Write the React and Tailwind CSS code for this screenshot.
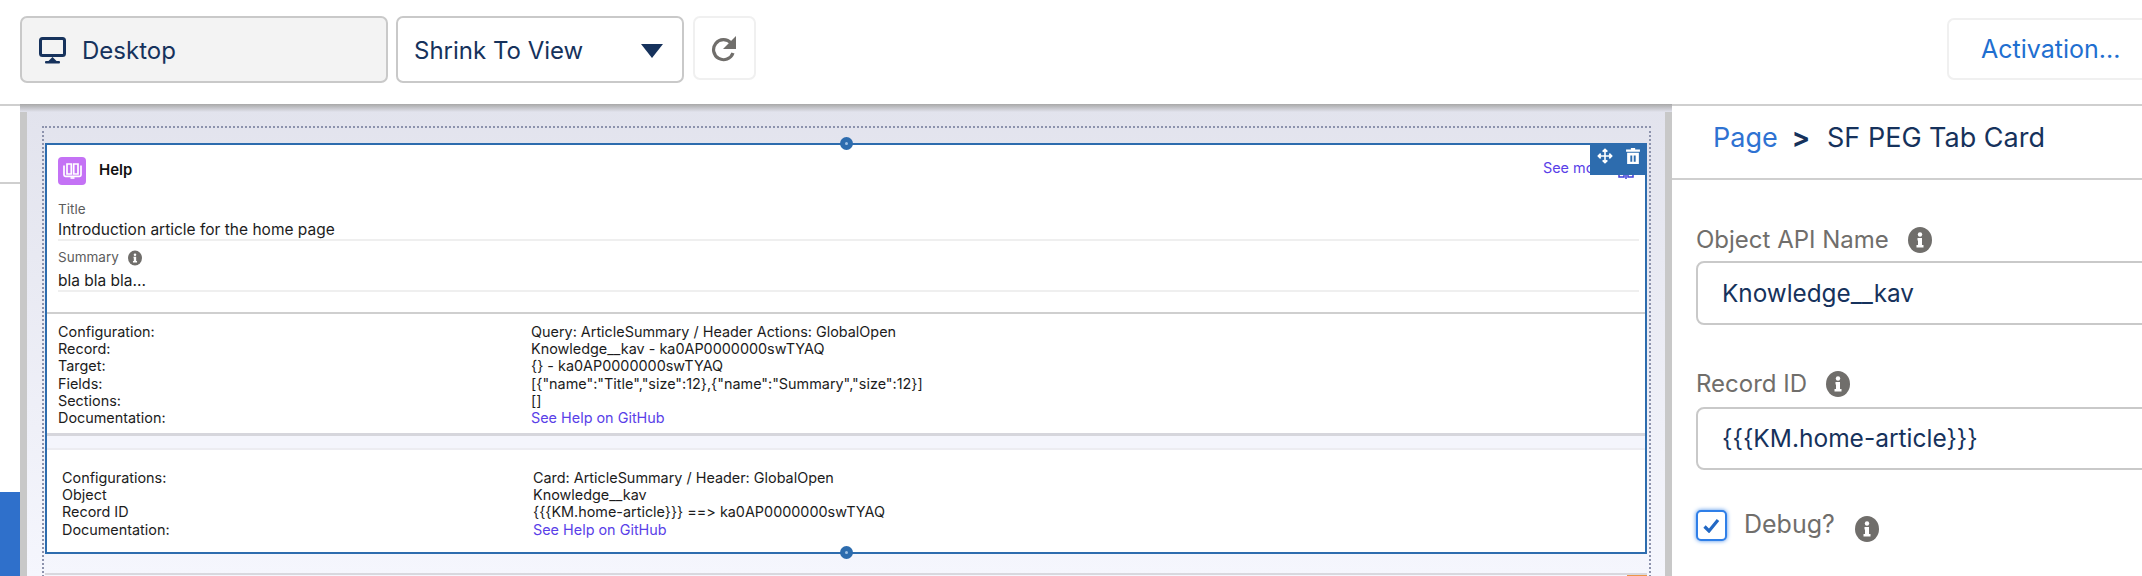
import React from "react";

function Info({ size = 24, className = "" }) {
  return (
    <svg width={size} height={size + 2} viewBox="0 0 24 26" className={className}>
      <ellipse cx="12" cy="13" rx="12" ry="13" fill="#706e6b" />
      <circle cx="12" cy="7.500" r="2.200" fill="#fff" />
      <path d="M9.500 11h4.500v7h1.500v2.500H8.500V18h1.500v-4.500H9.500z" fill="#fff" />
    </svg>
  );
}

function Dot({ className }) {
  return (
    <span className={"absolute left-[793px] w-[13px] h-[13px] rounded-full bg-[#2d6cae] flex items-center justify-center " + className}>
      <span className="w-[3px] h-[3px] rounded-full bg-[#9dc0e4]" />
    </span>
  );
}

function Rows({ rows, labelW, link }) {
  return (
    <div className="flex flex-col text-[14.4px] leading-[17.2px] text-[#1c1c1c]">
      {rows.map(([a, b], i) => (
        <div key={i} className="flex">
          <div className={labelW}>{a}</div>
          <div className={b === link ? "text-[#5a3fe8]" : ""}>{b}</div>
        </div>
      ))}
    </div>
  );
}

export default function App() {
  return (
    <div className="w-[2142px] h-[576px] overflow-hidden bg-white flex flex-col font-['Inter',sans-serif] [font-feature-settings:'calt'_0]">
      {/* Toolbar */}
      <div className="h-[104px] flex items-start pt-[16px] pl-[20px] pr-0 gap-[8px] shrink-0">
        <div className="w-[368px] h-[67px] rounded-[7px] border-2 border-[#c9c9c9] bg-[#f3f3f3] flex items-center pl-[17px] gap-[16px] text-[#16325c] text-[24px] pt-[2px]">
          <svg width="27" height="27" viewBox="0 0 27 27">
            <rect x="1.500" y="1.500" width="24" height="17" rx="2" fill="none" stroke="#16325c" strokeWidth="3" />
            <path d="M13.500 20l5 5h-10z" fill="#16325c" />
            <rect x="6" y="24" width="15" height="2.500" rx="1" fill="#16325c" />
          </svg>
          <span>Desktop</span>
        </div>
        <div className="w-[288px] h-[67px] rounded-[7px] border-2 border-[#c9c9c9] bg-white flex items-center justify-between pl-[16px] pr-[19px] text-[#16325c] text-[24px] pt-[2px]">
          <span>Shrink To View</span>
          <svg width="22" height="14" viewBox="0 0 22 14"><path d="M0 0h22L11 14z" fill="#16325c" /></svg>
        </div>
        <div className="w-[63px] h-[64px] rounded-[7px] border-2 border-[#f0f0f0] flex items-center justify-center ml-[1px]">
          <svg width="27" height="27" viewBox="0 0 27 27" fill="none">
            <path d="M20 8A10 10 0 1 0 22 18" stroke="#706e6b" strokeWidth="3.200" />
            <path d="M25 1V14H12z" fill="#706e6b" />
          </svg>
        </div>
        <div className="ml-auto mt-[2px] w-[211px] h-[62px] rounded-l-[7px] border-2 border-r-0 border-[#f0f0f0] flex items-center pl-[32px] text-[#1f6fd0] text-[25px] -mr-[16px] pt-[2px]">
          Activation...
        </div>
      </div>

      <div className="flex-1 flex min-h-0">
        {/* Left gutter */}
        <div className="w-[20px] shrink-0 flex flex-col">
          <div className="h-[80px] border-t-2 border-b-2 border-[#cfcfcf]" />
          <div className="h-[308px]" />
          <div className="flex-1 bg-[#2f70cb]" />
        </div>

        {/* Canvas */}
        <div className="w-[1652px] shrink-0 border-x-[7px] border-[#c8c8c8] flex flex-col bg-gradient-to-b from-[#e2e3ed] to-[#f5f6fd] relative">
          <div className="h-[8px] bg-gradient-to-b from-[#a8a8a8] to-[#e2e3ed] -mx-[7px] shrink-0" />
          <div className="ml-[15px] mr-[14px] mt-[14px] border-t-2 border-x-2 border-dotted border-[#8d93ad] flex-1 pl-[1px] pr-[2px] pt-[15px] relative">
            <div className="border-[2px] border-[#2d6cae] bg-white h-[411px] relative flex flex-col">
              <Dot className="-top-[8px]" />
              <Dot className="-bottom-[7px]" />

              {/* Move / delete handle */}
              <div className="absolute -right-[2px] -top-[2px] w-[57px] h-[32px] bg-[#2d6cae] flex items-center justify-center gap-[13px] z-10 pb-[6px]">
                <svg width="16" height="16" viewBox="0 0 24 24" fill="none" stroke="#fff" strokeWidth="2.400">
                  <path d="M12 2v20M2 12h20" />
                  <path d="M8.500 5.500 12 2l3.500 3.500M8.500 18.500 12 22l3.500-3.500M5.500 8.500 2 12l3.500 3.500M18.500 8.500 22 12l-3.500 3.500" fill="#fff" />
                </svg>
                <svg width="14" height="16" viewBox="0 0 13 15" fill="#fff">
                  <path d="M4.500 0h4v1.500h4.500v2H0v-2h4.500zM1 4.500h11V15H1zM4 7v6h1.800V7zM7.200 7v6H9V7z" fillRule="evenodd" />
                </svg>
              </div>

              {/* Card header */}
              <div className="h-[51px] shrink-0 flex items-center pl-[11px] relative">
                <div className="w-[28px] h-[28px] rounded-[4px] bg-[#c472f5] flex items-center justify-center">
                  <svg width="19" height="16" viewBox="0 0 19 16" fill="none" stroke="#fff" strokeWidth="1.700">
                    <path d="M1 2.500v9.500c0 .8.600 1.300 1.400 1.300h14.200c.8 0 1.400-.5 1.400-1.300V2.500" />
                    <path d="M4 1h4.300v10H4zM10.700 1H15v10h-4.300z" />
                    <path d="M7.500 15h4" />
                  </svg>
                </div>
                <span className="ml-[13px] text-[15px] font-semibold text-[#111]">Help</span>
                <span className="absolute left-[1496px] top-[12px] text-[14.4px] text-[#5a3fe8]">See more</span>
                <svg width="16" height="6" viewBox="0 0 16 6" fill="none" stroke="#3f3fd8" strokeWidth="1.500" className="absolute left-[1571px] top-[28px]">
                  <path d="M1 0v4h5V0M10 0v4h5V0M8 0v6" />
                </svg>
              </div>

              {/* Fields */}
              <div className="mr-[6px] pl-[11px] flex flex-col">
                <div className="h-[45px] border-b-2 border-[#efefef] flex flex-col">
                  <div className="text-[13.500px] leading-[17px] text-[#5c5c5c] mt-[5px]">Title</div>
                  <div className="text-[15.500px] leading-[21px] text-[#1c1c1c] mt-[1px]">Introduction article for the home page</div>
                </div>
                <div className="h-[51px] border-b-2 border-[#efefef] flex flex-col">
                  <div className="text-[13.500px] leading-[17px] text-[#5c5c5c] mt-[8px] flex items-center gap-[9px]">
                    Summary
                    <Info size={14} />
                  </div>
                  <div className="text-[15.500px] leading-[21px] text-[#1c1c1c] mt-[4px]">bla bla bla...</div>
                </div>
              </div>

              {/* Debug 1 */}
              <div className="mt-[20px] border-t-2 border-[#cfcfcf] pt-[9px] pl-[11px] h-[124px] shrink-0 border-b-[3px] border-b-[#d6d6dc]">
                <Rows
                  labelW="w-[473px]"
                  link="See Help on GitHub"
                  rows={[
                    ["Configuration:", "Query: ArticleSummary / Header Actions: GlobalOpen"],
                    ["Record:", "Knowledge__kav - ka0AP0000000swTYAQ"],
                    ["Target:", "{} - ka0AP0000000swTYAQ"],
                    ["Fields:", '[{"name":"Title","size":12},{"name":"Summary","size":12}]'],
                    ["Sections:", "[]"],
                    ["Documentation:", "See Help on GitHub"],
                  ]}
                />
              </div>

              <div className="h-[14px] bg-[#f4f5fc] border-b-2 border-[#ececf1] shrink-0" />

              {/* Debug 2 */}
              <div className="pt-[19px] pl-[15px]">
                <Rows
                  labelW="w-[471px]"
                  link="See Help on GitHub"
                  rows={[
                    ["Configurations:", "Card: ArticleSummary / Header: GlobalOpen"],
                    ["Object", "Knowledge__kav"],
                    ["Record ID", "{{{KM.home-article}}} ==> ka0AP0000000swTYAQ"],
                    ["Documentation:", "See Help on GitHub"],
                  ]}
                />
              </div>
            </div>

            {/* Next component */}
            <div className="mt-[19px] border-t-2 border-[#d8d8de] h-[4px] relative">
              <div className="absolute right-0 top-0 w-[20px] h-[4px] bg-[#ec9648]" />
            </div>
          </div>
        </div>

        {/* Right panel */}
        <div className="flex-1 min-w-0 border-t-2 border-[#cfcfcf] flex flex-col">
          <div className="h-[74px] border-b-2 border-[#cfcfcf] flex items-center pl-[41px] pb-[7px] text-[27px] text-[#16325c] shrink-0">
            <span className="text-[#2e72d2]">Page</span>
            <span className="ml-[14px] font-bold">&gt;</span>
            <span className="ml-[17px]">SF PEG Tab Card</span>
          </div>
          <div className="pl-[25px] flex flex-col">
            <div className="mt-[46px] h-[26px] flex items-center gap-[19px] text-[24px] text-[#706e6b] -ml-[1px] pt-[2px]">
              Object API Name <Info />
            </div>
            <div className="mt-[9px] w-[600px] h-[64px] rounded-[8px] border-2 border-[#c9c9c9] flex items-center pl-[24px] text-[24.300px] text-[#16325c] -ml-[1px]">
              Knowledge__kav
            </div>
            <div className="mt-[46px] h-[26px] flex items-center gap-[19px] text-[24px] text-[#706e6b] -ml-[1px]">
              Record ID <Info />
            </div>
            <div className="mt-[10px] w-[600px] h-[63px] rounded-[8px] border-2 border-[#c9c9c9] flex items-center pl-[24px] text-[24.500px] text-[#16325c] -ml-[1px]">
              {"{{{KM.home-article}}}"}
            </div>
            <div className="mt-[40px] flex items-start -ml-[1px]">
              <div className="w-[31px] h-[31px] rounded-[5px] border-2 border-[#2f7fe8] shadow-[0_0_4px_#4c8fe8] bg-white flex items-center justify-center">
                <svg width="17" height="15" viewBox="0 0 17 15" fill="none"><path d="M1.500 8.500 6 13 15 2" stroke="#2268c4" strokeWidth="3.200" /></svg>
              </div>
              <span className="ml-[17px] text-[25px] leading-[28px] text-[#706e6b]">Debug?</span>
              <Info className="ml-[20px] mt-[6px]" />
            </div>
          </div>
        </div>
      </div>
    </div>
  );
}
